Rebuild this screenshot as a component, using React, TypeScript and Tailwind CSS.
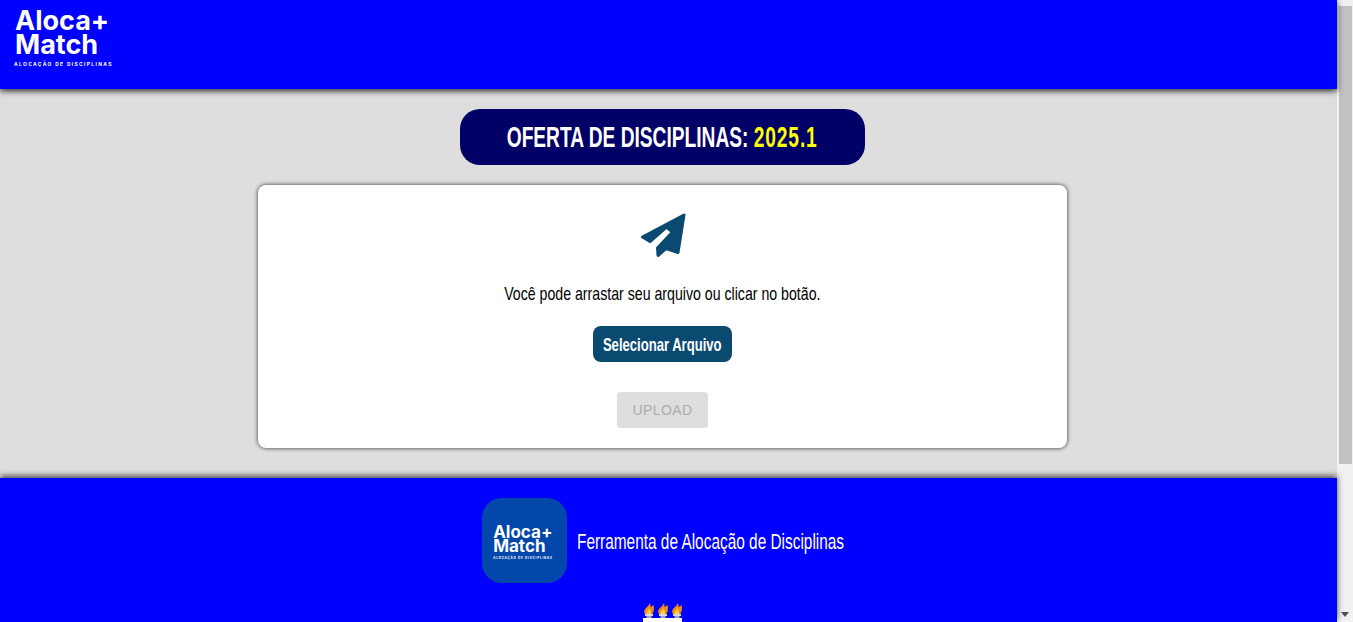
import React from 'react';

function LogoText({ small }: { small?: boolean }) {
  if (small) {
    return (
      <div className="flex flex-col pr-[3px] pt-[3px] font-['Inter',sans-serif] text-white">
        <span className="text-[17px] font-bold leading-[14px]">Aloca+</span>
        <span className="text-[17px] font-bold leading-[14px]">Match</span>
        <span className="mt-[3px] whitespace-nowrap text-[3px] font-bold leading-[4px] tracking-[0.8px]">ALOCAÇÃO DE DISCIPLINAS</span>
      </div>
    );
  }
  return (
    <div className="flex flex-col font-['Inter',sans-serif] text-white">
      <span className="text-[27px] font-bold leading-[24px]">Aloca+</span>
      <span className="text-[27px] font-bold leading-[24px]">Match</span>
      <span className="mt-[4px] -ml-px whitespace-nowrap text-[5px] font-bold leading-[7px] tracking-[1.3px]">ALOCAÇÃO DE DISCIPLINAS</span>
    </div>
  );
}

function PlaneIcon() {
  return (
    <svg viewBox="636 211 52 52" className="h-[52px] w-[52px]">
      <path
        d="M683 216 L641.5 238 L649 242.5 L665.5 228 L671.5 233 L656.5 249 L657 256.5 L665 249.5 L677 253.5 Z"
        fill="#0a4a70"
        stroke="#0a4a70"
        strokeWidth="3"
        strokeLinejoin="round"
      />
    </svg>
  );
}

function Torch() {
  return (
    <svg width="12" height="15" viewBox="0 0 12 15">
      <path d="M2 11 C0 8 2 6 4 4 C5 3 6 2 7 0 C7.5 2 7.5 3 7.5 4 C8.5 3.5 9.5 3 10.5 2 C11.5 5 11 9 9 11 Z" fill="#f08c16" />
      <path d="M4 11 C3 9 5 7.5 6.5 5.5 C8 8 8.5 10 8 11 Z" fill="#ffd24a" />
      <rect x="2" y="11" width="8" height="2" fill="#d8d8d8" />
      <rect x="3.5" y="13" width="5" height="2" fill="#a9a9a9" />
    </svg>
  );
}

export default function App() {
  return (
    <div className="flex h-[622px] w-full overflow-hidden font-['Liberation_Sans',sans-serif]">
      <div className="flex w-[1337px] shrink-0 flex-col bg-[#dedede]">
        <header className="relative z-10 h-[89px] shrink-0 bg-[#0000ff] pl-[15px] pt-[9px] shadow-[0_2px_6px_rgba(0,0,0,0.8)]">
          <LogoText />
        </header>

        <main className="flex h-[389px] shrink-0 flex-col items-center pr-3 pt-5">
          <h1 className="flex h-14 w-[405px] items-center justify-center rounded-[20px] bg-[#000066] pt-[2px] text-[29px] font-bold text-white">
            <span className="inline-block shrink-0 scale-x-[0.661] whitespace-nowrap">
              OFERTA DE DISCIPLINAS: <span className="tracking-[1.3px] text-[#ffff00]">2025.1</span>
            </span>
          </h1>

          <section className="mt-5 flex h-[263px] w-[809px] flex-col items-center rounded-lg bg-white pt-[25px] shadow-[0_0_4px_rgba(0,0,0,0.8)]">
            <PlaneIcon />
            <p className="mt-[20px] inline-block scale-x-[0.745] whitespace-nowrap text-[19px] leading-[24px] text-black">Você pode arrastar seu arquivo ou clicar no botão.</p>
            <button className="mt-[20px] flex h-9 w-[139px] items-center justify-center rounded-lg bg-[#0a4a70] pt-[2px] text-[19px] font-bold text-white">
              <span className="inline-block shrink-0 scale-x-[0.688] whitespace-nowrap">Selecionar Arquivo</span>
            </button>
            <button className="mt-[30px] h-9 w-[91px] rounded bg-[#dedede] text-[14px] tracking-[0.4px] text-[#adadad]">UPLOAD</button>
          </section>
        </main>

        <footer className="relative flex flex-1 flex-col items-center bg-[#0000ff] pr-3 shadow-[0_-2px_6px_rgba(0,0,0,0.7)]">
          <div className="mt-5 flex items-center gap-[10px]">
            <div className="flex h-[85px] w-[85px] items-center justify-center rounded-[20px] bg-[#0347ab]">
              <LogoText small />
            </div>
            <div className="w-[266px] pt-[2px]">
              <span className="inline-block origin-left scale-x-[0.70] whitespace-nowrap text-[22px] text-white">Ferramenta de Alocação de Disciplinas</span>
            </div>
          </div>
          <div className="mt-5 flex flex-col items-center">
            <div className="flex gap-[2px]">
              <Torch />
              <Torch />
              <Torch />
            </div>
            <div className="h-1 w-[39px] bg-white" />
          </div>
        </footer>
      </div>

      <div className="flex w-4 shrink-0 flex-col items-center bg-[#f1f1f1]">
        <div className="mt-[6px] h-[458px] w-[13px] bg-[#c1c1c1]" />
        <svg width="8" height="5" viewBox="0 0 8 5" className="mt-[148px]">
          <path d="M0 0 H8 L4 5 Z" fill="#505050" />
        </svg>
      </div>
    </div>
  );
}
